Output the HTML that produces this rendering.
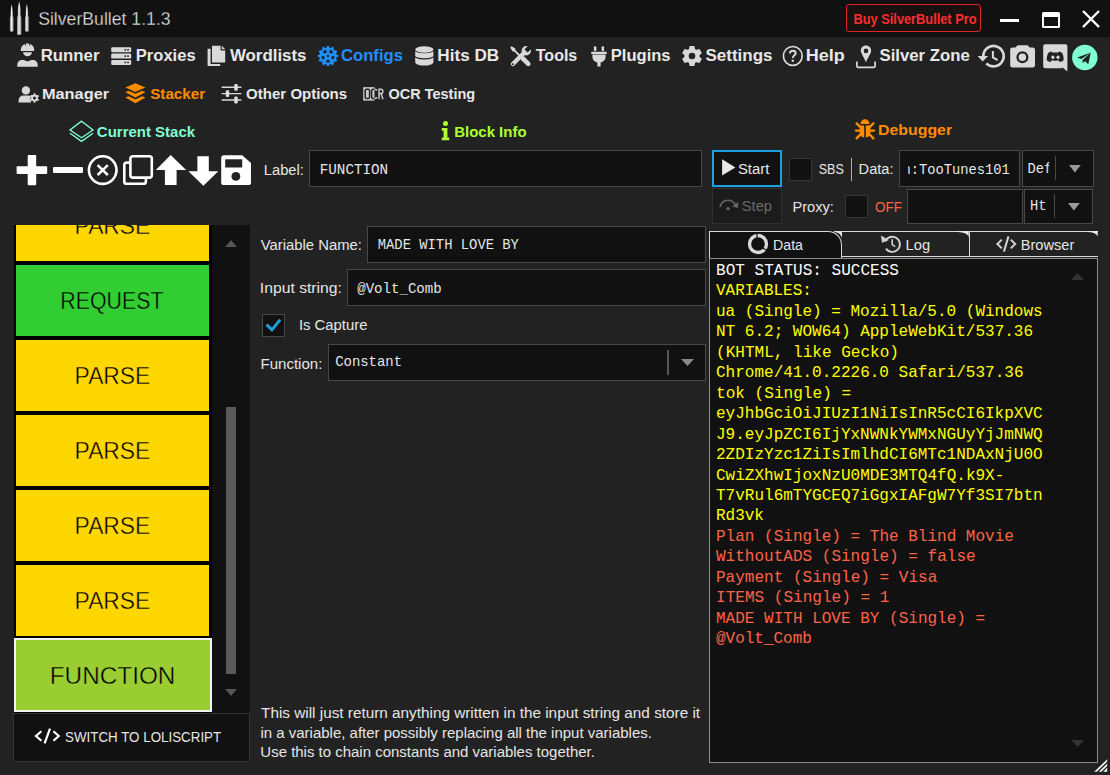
<!DOCTYPE html>
<html><head><meta charset="utf-8"><title>SilverBullet 1.1.3</title>
<style>
html,body{margin:0;padding:0;}
body{width:1110px;height:775px;overflow:hidden;background:#222222;position:relative;font-family:"Liberation Sans",sans-serif;}
.a{position:absolute;box-sizing:border-box;}
.t{position:absolute;white-space:pre;line-height:0;transform-origin:0 50%;display:block;z-index:5;}
.in{position:absolute;box-sizing:border-box;background:#111111;border:1px solid #484848;}
.blk{position:absolute;left:16.2px;width:192.6px;height:70.5px;}
svg{position:absolute;overflow:visible;}
</style></head><body>
<!-- title bar -->
<div class="a" style="left:0;top:0;width:1110px;height:37px;background:#111111"></div>
<div class="a" style="left:846px;top:4px;width:135px;height:28px;border:1.4px solid #dc2626;border-radius:3px;background:#1a1111"></div>
<!-- window buttons -->
<div class="a" style="left:1000px;top:19px;width:19px;height:2.5px;background:#fff"></div>
<div class="a" style="left:1042px;top:12px;width:18px;height:16px;border:2px solid #fff;border-top-width:5px;border-radius:1.5px"></div>
<svg style="left:1082px;top:10px" width="18" height="18" viewBox="0 0 18 18"><path d="M1 1L17 17M17 1L1 17" stroke="#fff" stroke-width="2.4" fill="none"/></svg>

<!-- stack list -->
<div class="a" style="left:14px;top:225px;width:197.5px;height:488px;background:#000"></div>
<div class="blk" style="top:190px;background:#ffd700"></div>
<div class="blk" style="top:265px;background:#32cd32"></div>
<div class="blk" style="top:340px;background:#ffd700"></div>
<div class="blk" style="top:415px;background:#ffd700"></div>
<div class="blk" style="top:490px;background:#ffd700"></div>
<div class="blk" style="top:565px;background:#ffd700"></div>
<div class="a" style="left:14px;top:638px;width:197.5px;height:74px;background:#9acd32;border:2px solid #f4f4f4"></div>
<!-- mask above list -->
<div class="a" style="left:10px;top:188px;width:240px;height:37px;background:#222222;z-index:8"></div>
<!-- list scrollbar -->
<div class="a" style="left:212px;top:225px;width:37.5px;height:488px;background:#111111"></div>
<div class="a" style="left:226px;top:407px;width:10px;height:267px;background:#595959"></div>
<svg style="left:225px;top:240px" width="12" height="7" viewBox="0 0 12 7"><path d="M0 7L6 0L12 7Z" fill="#555"/></svg>
<svg style="left:225px;top:689px" width="12" height="7" viewBox="0 0 12 7"><path d="M0 0L6 7L12 0Z" fill="#555"/></svg>
<!-- switch button -->
<div class="in" style="left:13px;top:713px;width:236.5px;height:49px;border-color:#333"></div>

<!-- inputs -->
<div class="in" style="left:309.2px;top:150.3px;width:392.6px;height:37.1px"></div>
<div class="in" style="left:367px;top:225.5px;width:338.5px;height:37px"></div>
<div class="in" style="left:347px;top:269px;width:358.5px;height:37px"></div>
<div class="in" style="left:261.5px;top:313.5px;width:23.5px;height:23px"></div>
<div class="in" style="left:328px;top:344px;width:377.5px;height:37px"></div>
<div class="a" style="left:667px;top:350px;width:1.5px;height:25px;background:#555"></div>
<svg style="left:681px;top:359px" width="13" height="7" viewBox="0 0 13 7"><path d="M0 0L6.5 7L13 0Z" fill="#8a8a8a"/></svg>

<!-- debugger controls -->
<div class="in" style="left:712.3px;top:150.2px;width:69.6px;height:36.9px;border:2.5px solid #1ba1e2"></div>
<div class="in" style="left:712.3px;top:188.3px;width:69.6px;height:36px;border-color:#303030;background:#1b1b1b"></div>
<div class="in" style="left:789px;top:157.5px;width:23px;height:23px;border-color:#353535"></div>
<div class="a" style="left:850.5px;top:157.5px;width:1.5px;height:23px;background:#b0b0b0"></div>
<div class="in" style="left:899.2px;top:150.3px;width:121px;height:37.1px"></div>
<div class="in" style="left:1021.6px;top:150.3px;width:72.2px;height:37.1px"></div>
<div class="a" style="left:1054.8px;top:156.4px;width:1.3px;height:24px;background:#484848"></div>
<svg style="left:1069px;top:164.9px" width="12" height="8" viewBox="0 0 12 8"><path d="M0 0L5.9 7.6L11.8 0Z" fill="#999"/></svg>
<div class="in" style="left:845px;top:195px;width:23px;height:23px;border-color:#353535"></div>
<div class="in" style="left:907.3px;top:188.6px;width:115.4px;height:35.6px"></div>
<div class="in" style="left:1023.5px;top:188.6px;width:69.3px;height:35.6px"></div>
<div class="a" style="left:1053.9px;top:194.2px;width:1.3px;height:24px;background:#484848"></div>
<svg style="left:1068.1px;top:203.1px" width="12" height="8" viewBox="0 0 12 8"><path d="M0 0L5.9 7.4L11.8 0Z" fill="#999"/></svg>

<!-- tabs -->
<div class="a" style="left:709px;top:230.5px;width:133px;height:28px;background:#111111;border:1px solid #d8d8d8;border-bottom:none;border-radius:0 14px 0 0"></div>
<div class="a" style="left:841px;top:230.5px;width:128.5px;height:26.5px;border:1px solid #d8d8d8;border-left:none;"></div>
<div class="a" style="left:968.5px;top:230.5px;width:129.5px;height:26.5px;border:1px solid #d8d8d8;border-left:none;border-right:none"></div>
<!-- console -->
<div class="a" style="left:709px;top:258.3px;width:389px;height:504.7px;background:#111111;border:1.3px solid #8c8c8c"></div>
<svg style="left:1071px;top:273px" width="13" height="7" viewBox="0 0 13 7"><path d="M0 7L6.5 0L13 7Z" fill="#333"/></svg>
<svg style="left:1071px;top:739.5px" width="13" height="7" viewBox="0 0 13 7"><path d="M0 0L6.5 7L13 0Z" fill="#333"/></svg>
<svg style="left:1094px;top:759px" width="14" height="13" viewBox="0 0 14 13"><path d="M0.2 12.8 L13.2 0.2 L13.2 2.6 L2.8 12.8 Z M4.8 12.8 L13.2 4.6 L13.2 7.0 L7.4 12.8 Z M9.2 12.8 L13.2 8.8 L13.2 12.8 Z" fill="#f4f4f4"/></svg>

<!-- logo bullets -->
<svg style="left:0;top:0" width="40" height="37" viewBox="0 0 40 37">
<defs><linearGradient id="bg" x1="0" x2="1" y1="0" y2="0"><stop offset="0" stop-color="#7d7d7d"/><stop offset="0.45" stop-color="#f0f0f0"/><stop offset="1" stop-color="#8a8a8a"/></linearGradient></defs>
<path d="M11.7 4.3 C11.13 7.30 10.55 10.30 10.55 13.30 L10.55 15.72 L9.85 17.92 L9.85 31.5 L13.55 31.5 L13.55 17.92 L12.85 15.72 L12.85 13.30 C12.85 10.30 12.27 7.30 11.7 4.3 Z" fill="url(#bg)"/>
<path d="M19.2 1.2 C18.52 4.20 17.84 7.20 17.84 10.20 L17.84 15.27 L17.00 17.47 L17.00 34.7 L21.40 34.7 L21.40 17.47 L20.56 15.27 L20.56 10.20 C20.56 7.20 19.88 4.20 19.2 1.2 Z" fill="url(#bg)"/>
<path d="M26.9 3.8 C26.31 6.80 25.72 9.80 25.72 12.80 L25.72 15.43 L25.00 17.63 L25.00 31.5 L28.80 31.5 L28.80 17.63 L28.08 15.43 L28.08 12.80 C28.08 9.80 27.49 6.80 26.9 3.8 Z" fill="url(#bg)"/>
</svg>

<!-- Runner: user hard hat -->
<svg style="left:17px;top:43px" width="21" height="24" viewBox="0 0 21 24" fill="#d9d9d9">
<path d="M3.8 8.0 L17.2 8.0 L17.2 6.9 C17.2 4.2 15.6 2.0 13.2 1.1 L12.6 3.6 L12.0 0.4 L9.0 0.4 L8.4 3.6 L7.8 1.1 C5.4 2.0 3.8 4.2 3.8 6.9 Z"/>
<path d="M6.1 9.3 L14.9 9.3 C14.9 11.6 12.9 13.3 10.5 13.3 C8.1 13.3 6.1 11.6 6.1 9.3 Z"/>
<path d="M0.3 23.8 L0.3 21.5 C0.3 18.8 2.6 16.9 5.3 16.9 L6.6 16.9 L10.5 18.6 L14.4 16.9 L15.7 16.9 C18.4 16.9 20.7 18.8 20.7 21.5 L20.7 23.8 Z"/>
</svg>

<!-- Proxies: server -->
<svg style="left:111px;top:47px" width="21" height="18" viewBox="0 0 21 18">
<g fill="#d9d9d9"><rect x="0.2" y="0.3" width="20" height="5" rx="1.2"/><rect x="0.2" y="6.6" width="20" height="5" rx="1.2"/><rect x="0.2" y="12.9" width="20" height="5" rx="1.2"/></g>
<g fill="#222"><rect x="13.4" y="2.1" width="1.7" height="1.5"/><rect x="16.2" y="2.1" width="1.7" height="1.5"/><rect x="13.4" y="8.4" width="1.7" height="1.5"/><rect x="16.2" y="8.4" width="1.7" height="1.5"/><rect x="13.4" y="14.7" width="1.7" height="1.5"/><rect x="16.2" y="14.7" width="1.7" height="1.5"/></g>
</svg>

<!-- Wordlists: copy -->
<svg style="left:207px;top:45px" width="19" height="22" viewBox="0 0 19 22" fill="#d9d9d9">
<path d="M0.6 3.7 L3.6 3.7 L3.6 19 L13.2 19 L13.2 21 L0.6 21 Z"/>
<path d="M5.0 0.8 L13.6 0.8 L13.6 5.4 L18.2 5.4 L18.2 17.6 L5.0 17.6 Z"/>
<path d="M14.8 0.8 L18.2 4.2 L14.8 4.2 Z"/>
</svg>

<!-- Configs: wheel -->
<svg style="left:317.7px;top:45.9px" width="20" height="20" viewBox="-10 -10 20 20">
<g fill="#1e90ff"><circle r="8.6"/>
<g id="tt"><rect x="-1.35" y="-10.1" width="2.7" height="3" rx="0.7"/></g><use href="#tt" transform="rotate(30)"/><use href="#tt" transform="rotate(60)"/><use href="#tt" transform="rotate(90)"/><use href="#tt" transform="rotate(120)"/><use href="#tt" transform="rotate(150)"/><use href="#tt" transform="rotate(180)"/><use href="#tt" transform="rotate(210)"/><use href="#tt" transform="rotate(240)"/><use href="#tt" transform="rotate(270)"/><use href="#tt" transform="rotate(300)"/><use href="#tt" transform="rotate(330)"/></g>
<g fill="#222"><circle r="1.15"/><path transform="rotate(0)" d="M-2.2 6.0 Q0 7.1 2.2 6.0 L1.0 3.7 Q0 3.3 -1.0 3.7 Z"/><path transform="rotate(72)" d="M-2.2 6.0 Q0 7.1 2.2 6.0 L1.0 3.7 Q0 3.3 -1.0 3.7 Z"/><path transform="rotate(144)" d="M-2.2 6.0 Q0 7.1 2.2 6.0 L1.0 3.7 Q0 3.3 -1.0 3.7 Z"/><path transform="rotate(216)" d="M-2.2 6.0 Q0 7.1 2.2 6.0 L1.0 3.7 Q0 3.3 -1.0 3.7 Z"/><path transform="rotate(288)" d="M-2.2 6.0 Q0 7.1 2.2 6.0 L1.0 3.7 Q0 3.3 -1.0 3.7 Z"/></g>
</svg>

<!-- Hits DB: database -->
<svg style="left:415px;top:46px" width="19" height="20" viewBox="0 0 19 20" fill="#d9d9d9">
<ellipse cx="9.3" cy="3.5" rx="9.1" ry="3.3"/>
<path d="M0.2 5.0 C2 8.0 16.6 8.0 18.4 5.0 L18.4 9.9 C16.6 12.9 2 12.9 0.2 9.9 Z"/>
<path d="M0.2 11.3 C2 14.3 16.6 14.3 18.4 11.3 L18.4 16.4 C16.6 20.6 2 20.6 0.2 16.4 Z"/>
</svg>

<!-- Tools -->
<svg style="left:509.7px;top:45.8px" width="21" height="21" viewBox="0 0 21 21">
<g fill="#d9d9d9" stroke="none">
<path d="M0.2 1.6 L1.6 0.2 L5.2 2.4 L5.6 4.4 L4.4 5.6 L2.4 5.2 Z"/>
<circle cx="16.3" cy="4.7" r="4.7"/>
</g>
<g stroke="#d9d9d9" fill="none">
<path d="M4.6 4.6 L10.4 10.4" stroke-width="1.9"/>
<path d="M13.0 12.6 L18.3 17.9" stroke-width="4.6" stroke-linecap="round"/>
<path d="M12.6 12.2 L13.6 13.2" stroke-width="4.6"/>
<path d="M2.9 18.1 L14.2 6.8" stroke-width="4.3" stroke-linecap="round"/>
</g>
<path d="M16.0 5.0 L14.4 3.4 L18.6 -0.8 L21.8 2.4 L17.6 6.6 Z" fill="#222"/>
<circle cx="2.8" cy="18.2" r="0.95" fill="#222"/>
</svg>

<!-- Plugins: plug -->
<svg style="left:590.5px;top:45.8px" width="16" height="21" viewBox="0 0 16 21" fill="#d9d9d9">
<rect x="2.9" y="0.2" width="2.5" height="5" rx="1.1"/><rect x="10.6" y="0.2" width="2.5" height="5" rx="1.1"/>
<rect x="0.2" y="5.7" width="15.6" height="2.3" rx="0.6"/>
<path d="M1.4 8.6 L14.6 8.6 L14.6 10.4 C14.6 13.6 12.6 15.8 9.6 16.4 L9.6 20.4 L6.4 20.4 L6.4 16.4 C3.4 15.8 1.4 13.6 1.4 10.4 Z"/>
</svg>

<!-- Settings: cog -->
<svg style="left:681.7px;top:45.9px" width="20" height="20" viewBox="-10 -10 20 20">
<g fill="#d9d9d9"><circle r="7.4"/>
<g id="ct"><path d="M-3.3 -6.2 L-2.3 -10 L2.3 -10 L3.3 -6.2 Z"/></g>
<use href="#ct" transform="rotate(60)"/><use href="#ct" transform="rotate(120)"/><use href="#ct" transform="rotate(180)"/><use href="#ct" transform="rotate(240)"/><use href="#ct" transform="rotate(300)"/></g>
<circle r="3.3" fill="#222"/>
</svg>

<!-- Help -->
<svg style="left:783px;top:46px" width="20" height="20" viewBox="0 0 20 20">
<circle cx="9.8" cy="9.9" r="9.4" fill="none" stroke="#d9d9d9" stroke-width="1.7"/>
<path d="M6.9 7.6 C6.9 5.6 8.2 4.7 9.8 4.7 C11.5 4.7 12.7 5.7 12.7 7.2 C12.7 9.2 9.8 9.4 9.8 12.0" fill="none" stroke="#d9d9d9" stroke-width="1.9"/>
<circle cx="9.8" cy="14.7" r="1.2" fill="#d9d9d9"/>
</svg>

<!-- Silver Zone: map pin on tray -->
<svg style="left:856px;top:44.5px" width="20" height="24" viewBox="0 0 20 24">
<path d="M10 0.4 C6.9 0.4 4.8 2.7 4.8 5.6 C4.8 8.8 8.2 12.6 10 17.4 C11.8 12.6 15.2 8.8 15.2 5.6 C15.2 2.7 13.1 0.4 10 0.4 Z" fill="#d9d9d9"/>
<circle cx="10" cy="5.9" r="2.3" fill="#222"/>
<path d="M0.9 17.2 L0.9 21.2 C0.9 22 1.4 22.4 2.2 22.4 L17.8 22.4 C18.6 22.4 19.1 22 19.1 21.2 L19.1 17.2" fill="none" stroke="#d9d9d9" stroke-width="1.7" stroke-linecap="round"/>
</svg>

<!-- history -->
<svg style="left:977px;top:44px" width="29" height="25" viewBox="0 0 29 25">
<path d="M6.3 12.6 A10.2 10.2 0 1 1 9.3 19.4" fill="none" stroke="#d9d9d9" stroke-width="2.7"/>
<path d="M0.6 11.9 L11.1 11.9 L5.6 17.6 Z" fill="#d9d9d9"/>
<path d="M15.9 7.0 L15.9 13.4 L20.6 16.2" fill="none" stroke="#d9d9d9" stroke-width="2"/>
</svg>

<!-- camera -->
<svg style="left:1010px;top:45px" width="26" height="23" viewBox="0 0 26 23">
<path d="M2.6 2.4 L5.6 2.4 L7.2 0.6 Q7.6 0.2 8.2 0.2 L17.0 0.2 Q17.6 0.2 18.0 0.6 L19.6 2.4 L22.6 2.4 Q25.0 2.4 25.0 4.8 L25.0 20.2 Q25.0 22.6 22.6 22.6 L2.6 22.6 Q0.2 22.6 0.2 20.2 L0.2 4.8 Q0.2 2.4 2.6 2.4 Z" fill="#d9d9d9"/>
<circle cx="12.4" cy="12.3" r="4.9" fill="none" stroke="#222" stroke-width="2.3"/>
</svg>

<!-- discord -->
<svg style="left:1042.5px;top:43.5px" width="25" height="28" viewBox="0 0 25 28">
<path d="M2.2 0.3 L22.4 0.3 C23.6 0.3 24.4 1.1 24.4 2.3 L24.4 27.6 L18.6 22.8 L19.4 24.2 L2.2 24.2 C1.0 24.2 0.2 23.4 0.2 22.2 L0.2 2.3 C0.2 1.1 1.0 0.3 2.2 0.3 Z" fill="#d9d9d9"/>
<path d="M8.6 7.6 C7.2 7.8 6.0 8.3 5.2 8.9 C4.0 11.2 3.6 13.8 3.8 16.2 C5.0 17.2 6.4 17.8 7.8 17.9 L8.8 16.5 C7.6 16.1 7.0 15.6 7.0 15.6 C10.4 17.2 14.0 17.2 17.4 15.6 C17.4 15.6 16.8 16.1 15.6 16.5 L16.6 17.9 C18.0 17.8 19.4 17.2 20.6 16.2 C20.8 13.8 20.4 11.2 19.2 8.9 C18.4 8.3 17.2 7.8 15.8 7.6 L15.3 8.6 C13.3 8.3 11.1 8.3 9.1 8.6 Z" fill="#222"/>
<ellipse cx="9.9" cy="13.2" rx="1.55" ry="1.7" fill="#d9d9d9"/><ellipse cx="15.0" cy="13.2" rx="1.55" ry="1.7" fill="#d9d9d9"/>
</svg>

<!-- telegram -->
<svg style="left:1072.4px;top:44.9px" width="26" height="26" viewBox="0 0 26 26">
<circle cx="12.8" cy="12.5" r="12.7" fill="#7fffd4"/>
<path d="M5.3 12.5 L18.8 7.6 L9.4 13.9 Z" fill="#222"/>
<path d="M18.8 7.6 L16.3 19.2 L13.1 16.2 L10.7 18.1 L10.6 15.0 Z" fill="#222"/>
</svg>

<!-- Manager: user cog -->
<svg style="left:18px;top:85.5px" width="22" height="17" viewBox="0 0 22 17">
<circle cx="7.9" cy="4.4" r="4.2" fill="#d9d9d9"/>
<path d="M0.6 16.6 L0.6 14.6 C0.6 11.6 2.8 9.6 5.6 9.6 L10.2 9.6 C11.4 9.6 12.3 9.9 13.0 10.5 L12.2 13.2 L13.2 16.6 Z" fill="#d9d9d9"/>
<g transform="translate(16.5 12)" fill="#d9d9d9"><circle r="3.4"/>
<g id="mt"><rect x="-0.9" y="-4.7" width="1.8" height="2"/></g><use href="#mt" transform="rotate(60)"/><use href="#mt" transform="rotate(120)"/><use href="#mt" transform="rotate(180)"/><use href="#mt" transform="rotate(240)"/><use href="#mt" transform="rotate(300)"/>
<circle r="1.5" fill="#222"/></g>
</svg>

<!-- Stacker: layer group -->
<svg style="left:125px;top:83.4px" width="21" height="21" viewBox="0 0 21 21" fill="#ff8c00">
<path d="M10.4 0.2 L20.4 4.6 L10.4 9.0 L0.4 4.6 Z"/>
<path d="M0.4 9.2 L3.6 7.8 L10.4 10.8 L17.2 7.8 L20.4 9.2 L10.4 14.4 Z"/>
<path d="M0.4 14.6 L3.6 13.2 L10.4 16.4 L17.2 13.2 L20.4 14.6 L10.4 20.2 Z"/>
</svg>

<!-- Other options: sliders -->
<svg style="left:221px;top:83px" width="21" height="21" viewBox="0 0 21 21">
<g stroke="#d9d9d9" stroke-width="1.4"><path d="M0.6 4.3H20.4M0.6 10.6H20.4M0.6 17H20.4"/></g>
<g fill="#e0e0e0"><rect x="13.3" y="0.9" width="3.4" height="6.8" rx="1.2"/><rect x="4.8" y="7.2" width="3.4" height="6.8" rx="1.2"/><rect x="13.3" y="13.6" width="3.4" height="6.8" rx="1.2"/></g>
</svg>

<!-- Current stack icon -->
<svg style="left:69px;top:120px" width="26" height="23" viewBox="0 0 26 23">
<path d="M12.5 1.2 L24.0 10.0 L12.5 17.8 L1.0 10.0 Z M1.0 13.3 L12.5 21.4 L24.0 13.3" fill="none" stroke="#7fffd4" stroke-width="1.35" stroke-linejoin="miter"/>
</svg>

<!-- Block info i -->
<svg style="left:440.5px;top:120.8px" width="9" height="20" viewBox="0 0 9 20" fill="#adff2f">
<circle cx="4.5" cy="2.6" r="2.5"/>
<path d="M0.8 7.0 L6.4 7.0 L6.4 16.4 L8.2 16.4 L8.2 19.2 L0.8 19.2 L0.8 16.4 L2.6 16.4 L2.6 9.8 L0.8 9.8 Z"/>
</svg>

<!-- Debugger bug -->
<svg style="left:854.6px;top:118.8px" width="20" height="21" viewBox="0 0 20 21">
<g fill="#ff8c00">
<path d="M5.6 5.0 C5.6 2.4 7.4 0.3 10 0.3 C12.6 0.3 14.4 2.4 14.4 5.0 Z"/>
<path d="M4.6 6.4 L9.2 6.4 L9.2 18.6 C6.4 18.4 4.6 16.2 4.6 13.6 Z"/>
<path d="M15.4 6.4 L10.8 6.4 L10.8 18.6 C13.6 18.4 15.4 16.2 15.4 13.6 Z"/>
</g>
<g stroke="#ff8c00" stroke-width="2.3" stroke-linecap="round" fill="none">
<path d="M4.8 7.6 L1.6 4.4 M15.2 7.6 L18.4 4.4 M4.6 11.6 L0.9 11.6 M15.4 11.6 L19.1 11.6 M5.2 15.6 L1.6 19.4 M14.8 15.6 L18.4 19.4"/>
</g>
</svg>

<!-- toolbar: plus -->
<svg style="left:16px;top:154px" width="32" height="32" viewBox="0 0 32 32" fill="#ffffff">
<rect x="0.6" y="12.3" width="30.6" height="7.6" rx="1"/><rect x="11.7" y="0.9" width="8.5" height="30.3" rx="1"/>
</svg>
<!-- minus -->
<div class="a" style="left:52.9px;top:166.9px;width:30.2px;height:6.4px;background:#fff;border-radius:1px"></div>
<!-- circle x -->
<svg style="left:87px;top:154px" width="32" height="32" viewBox="0 0 32 32">
<circle cx="15.7" cy="16.1" r="13.8" fill="none" stroke="#fff" stroke-width="2.6"/>
<path d="M10.6 11.2 L20.8 21 M20.8 11.2 L10.6 21" stroke="#fff" stroke-width="2.5" fill="none"/>
</svg>
<!-- copy -->
<svg style="left:122px;top:154px" width="32" height="32" viewBox="0 0 32 32" fill="none" stroke="#fff" stroke-width="2.6">
<path d="M7.2 8.6 L4.6 8.6 Q2.3 8.6 2.3 10.9 L2.3 27.4 Q2.3 29.7 4.6 29.7 L21.6 29.7 Q23.9 29.7 23.9 27.4 L23.9 25"/>
<rect x="8.4" y="2.2" width="21.4" height="21.4" rx="2.4"/>
</svg>
<!-- up arrow -->
<svg style="left:155px;top:154px" width="32" height="32" viewBox="0 0 32 32" fill="#fff">
<path d="M15.7 0.9 L31.1 16.1 L21.6 16.1 L21.6 31 L9.9 31 L9.9 16.1 L0.8 16.1 Z"/>
</svg>
<!-- down arrow -->
<svg style="left:188px;top:154px" width="32" height="32" viewBox="0 0 32 32" fill="#fff">
<path d="M9.4 2.2 L20.8 2.2 L20.8 17.3 L30.3 17.3 L15.4 31.8 L0.4 17.3 L9.4 17.3 Z"/>
</svg>
<!-- save -->
<svg style="left:221px;top:155px" width="31" height="31" viewBox="0 0 31 31">
<path d="M2.8 0.3 L21.2 0.3 L30 8.1 L30 27.4 Q30 30 27.4 30 L2.8 30 Q0.2 30 0.2 27.4 L0.2 2.9 Q0.2 0.3 2.8 0.3 Z" fill="#fff"/>
<rect x="4.2" y="4.3" width="17" height="8.2" fill="#222"/>
<circle cx="14.9" cy="21.4" r="4.4" fill="#222"/>
</svg>

<!-- checkbox tick -->
<svg style="left:262px;top:314px" width="23" height="22" viewBox="0 0 23 22">
<path d="M4.6 10.6 L9.9 15.9 L18.2 5.6" fill="none" stroke="#1ba1e2" stroke-width="2.9"/>
</svg>

<!-- play -->
<svg style="left:722px;top:159.4px" width="14" height="17" viewBox="0 0 14 17"><path d="M0.1 0.2 L13.4 8.4 L0.1 16.6 Z" fill="#e8e8e8"/></svg>
<!-- step -->
<svg style="left:719px;top:199px" width="20" height="12" viewBox="0 0 20 12">
<path d="M0.9 8.0 C2.2 3.4 5.4 1.2 9.0 1.2 C12.4 1.2 15.2 3.0 17.0 6.6" fill="none" stroke="#666" stroke-width="1.6"/>
<path d="M19.4 3.0 L18.9 8.9 L13.2 7.6 Z" fill="#666"/>
<circle cx="9.1" cy="9.7" r="1.7" fill="#666"/>
</svg>

<!-- tab icon: data circle-notch -->
<svg style="left:747px;top:233.2px" width="22" height="22" viewBox="-11 -11 22 22">
<circle r="8.5" fill="none" stroke="#dadada" stroke-width="3.3"/>
<path d="M-1.4 -11 L-0.2 -11 L-0.6 -5 L-1.8 -5 Z" fill="#111"/>
<path d="M5.0 3.4 L10.4 6.4 L9.6 7.6 L4.4 4.4 Z" fill="#111"/>
</svg>
<!-- tab icon: history -->
<svg style="left:880px;top:233.5px" width="22" height="21" viewBox="0 0 22 21">
<path d="M5.3 7.3 A7.6 7.6 0 1 1 6.0 14.6" fill="none" stroke="#d2d2d2" stroke-width="1.9"/>
<path d="M0.9 1.6 L2.0 8.8 L8.8 6.0 Z" fill="#d2d2d2"/>
<path d="M12.2 5.2 L12.2 10.6 L15.2 12.6" fill="none" stroke="#d2d2d2" stroke-width="1.6"/>
</svg>
<!-- tab icon: code -->
<svg style="left:996px;top:235.5px" width="21" height="16" viewBox="0 0 21 16" fill="none" stroke="#d2d2d2" stroke-width="2">
<path d="M5.8 3.6 L1.4 8.0 L5.8 12.4 M14.8 3.6 L19.2 8.0 L14.8 12.4 M12.5 0.4 L7.9 15.6"/>
</svg>
<!-- tab corner wedges -->
<svg style="left:958.3px;top:230.5px" width="11" height="7" viewBox="0 0 11 7"><path d="M0 0 L10.7 0 L10.7 6.2 Q9.6 1.2 0 1 Z" fill="#ececec"/></svg>
<svg style="left:1087px;top:230.5px" width="11" height="7" viewBox="0 0 11 7"><path d="M0 0 L10.7 0 L10.7 5.6 Q9.6 1.2 0 1 Z" fill="#ececec"/></svg>
<svg style="left:832px;top:230.5px" width="10" height="7" viewBox="0 0 10 7"><path d="M2 0 L10 0 L10 7 Q8 0.8 2 1 Z" fill="#e4e4e4"/></svg>

<!-- switch code icon -->
<svg style="left:34px;top:728px" width="27" height="16" viewBox="0 0 27 16" fill="none" stroke="#fff" stroke-width="2.2">
<path d="M7.4 3.2 L2.0 8.0 L7.4 12.8 M19.4 3.2 L24.8 8.0 L19.4 12.8 M16.0 0.6 L10.6 15.4"/>
</svg>

<!-- OCR icon -->
<svg style="left:363px;top:87px" width="21" height="14" viewBox="0 0 21 14">
<rect x="0.2" y="0.1" width="11.3" height="13.5" fill="#c9c9c9"/>
<rect x="2.2" y="2.2" width="4.4" height="9.4" rx="1.6" fill="none" stroke="#222" stroke-width="1.5"/>
<path d="M11.5 2.2 L10.4 2.2 Q8.6 2.2 8.6 4.0 L8.6 9.8 Q8.6 11.6 10.4 11.6 L11.5 11.6" fill="none" stroke="#222" stroke-width="1.5"/>
<path d="M11.5 2.2 L12.0 2.2 Q13.6 2.2 13.6 3.8 M11.5 11.6 L12.0 11.6 Q13.6 11.6 13.6 10.0" fill="none" stroke="#c9c9c9" stroke-width="1.5"/>
<path d="M16.0 12.2 L16.0 2.2 L18.0 2.2 Q19.8 2.2 19.8 4.4 Q19.8 6.6 18.0 6.6 L16.0 6.6 M18.0 6.6 L20.0 12.2" fill="none" stroke="#c9c9c9" stroke-width="1.5"/>
</svg>

<span id="t0" class="t" style="left:38px;top:18.59px;font:normal 18.5px/0 'Liberation Sans', sans-serif;color:#e4e4e4;transform:translateX(0.15px) scaleX(0.9543);-webkit-text-stroke:0.3px #111111;">SilverBullet 1.1.3</span>
<span id="t1" class="t" style="left:853px;top:19.45px;font:bold 14px/0 'Liberation Sans', sans-serif;color:#ff2d2d;transform:translateX(0.52px) scaleX(0.9138);">Buy SilverBullet Pro</span>
<span id="t2" class="t" style="left:40px;top:56.18px;font:bold 16.8px/0 'Liberation Sans', sans-serif;color:#e8e8e8;transform:translateX(0.69px) scaleX(0.9998);">Runner</span>
<span id="t3" class="t" style="left:135px;top:56.18px;font:bold 16.8px/0 'Liberation Sans', sans-serif;color:#e8e8e8;transform:translateX(0.79px) scaleX(0.9871);">Proxies</span>
<span id="t4" class="t" style="left:229px;top:56.18px;font:bold 16.8px/0 'Liberation Sans', sans-serif;color:#e8e8e8;transform:translateX(0.91px) scaleX(1.0060);">Wordlists</span>
<span id="t5" class="t" style="left:341px;top:56.18px;font:bold 16.8px/0 'Liberation Sans', sans-serif;color:#1e90ff;transform:translateX(0.07px) scaleX(0.9903);">Configs</span>
<span id="t6" class="t" style="left:437px;top:56.18px;font:bold 16.8px/0 'Liberation Sans', sans-serif;color:#e8e8e8;transform:translateX(0.33px) scaleX(1.0200);">Hits DB</span>
<span id="t7" class="t" style="left:535px;top:56.18px;font:bold 16.8px/0 'Liberation Sans', sans-serif;color:#e8e8e8;transform:translateX(0.77px) scaleX(0.9540);">Tools</span>
<span id="t8" class="t" style="left:610px;top:56.18px;font:bold 16.8px/0 'Liberation Sans', sans-serif;color:#e8e8e8;transform:translateX(0.77px) scaleX(0.9866);">Plugins</span>
<span id="t9" class="t" style="left:705px;top:56.18px;font:bold 16.8px/0 'Liberation Sans', sans-serif;color:#e8e8e8;transform:translateX(0.45px) scaleX(1.0123);">Settings</span>
<span id="t10" class="t" style="left:805px;top:56.18px;font:bold 16.8px/0 'Liberation Sans', sans-serif;color:#e8e8e8;transform:translateX(0.63px) scaleX(1.0761);">Help</span>
<span id="t11" class="t" style="left:879px;top:56.18px;font:bold 16.8px/0 'Liberation Sans', sans-serif;color:#e8e8e8;transform:translateX(0.47px) scaleX(0.9982);">Silver Zone</span>
<span id="t12" class="t" style="left:41px;top:93.73px;font:bold 15.2px/0 'Liberation Sans', sans-serif;color:#e8e8e8;transform:translateX(0.88px) scaleX(1.0775);">Manager</span>
<span id="t13" class="t" style="left:150px;top:93.73px;font:bold 15.2px/0 'Liberation Sans', sans-serif;color:#ff8c00;transform:translateX(0.17px) scaleX(1.0016);">Stacker</span>
<span id="t14" class="t" style="left:246px;top:93.73px;font:bold 15.2px/0 'Liberation Sans', sans-serif;color:#e8e8e8;transform:translateX(0.12px) scaleX(0.9897);">Other Options</span>
<span id="t15" class="t" style="left:388px;top:93.73px;font:bold 15.2px/0 'Liberation Sans', sans-serif;color:#e8e8e8;transform:translateX(0.41px) scaleX(0.9547);">OCR Testing</span>
<span id="t16" class="t" style="left:96px;top:131.73px;font:bold 15.2px/0 'Liberation Sans', sans-serif;color:#7fffd4;transform:translateX(0.83px) scaleX(0.9867);">Current Stack</span>
<span id="t17" class="t" style="left:454px;top:131.73px;font:bold 15.2px/0 'Liberation Sans', sans-serif;color:#adff2f;transform:translateX(0.18px) scaleX(0.9860);">Block Info</span>
<span id="t18" class="t" style="left:877px;top:129.73px;font:bold 15.2px/0 'Liberation Sans', sans-serif;color:#ff8c00;transform:translateX(0.92px) scaleX(1.0468);">Debugger</span>
<span id="t19" class="t" style="left:263px;top:169.63px;font:normal 15.5px/0 'Liberation Sans', sans-serif;color:#e6e6e6;transform:translateX(0.84px) scaleX(0.9469);">Label:</span>
<span id="t20" class="t" style="left:260px;top:244.63px;font:normal 15.5px/0 'Liberation Sans', sans-serif;color:#e6e6e6;transform:translateX(0.77px) scaleX(0.9569);">Variable Name:</span>
<span id="t21" class="t" style="left:259px;top:287.93px;font:normal 15.5px/0 'Liberation Sans', sans-serif;color:#e6e6e6;transform:translateX(0.80px) scaleX(1.0144);">Input string:</span>
<span id="t22" class="t" style="left:298px;top:324.63px;font:normal 15.5px/0 'Liberation Sans', sans-serif;color:#e6e6e6;transform:translateX(0.90px) scaleX(0.9582);">Is Capture</span>
<span id="t23" class="t" style="left:260px;top:363.63px;font:normal 15.5px/0 'Liberation Sans', sans-serif;color:#e6e6e6;transform:translateX(0.53px) scaleX(0.9697);">Function:</span>
<span id="t24" class="t" style="left:737px;top:169.33px;font:normal 15.5px/0 'Liberation Sans', sans-serif;color:#e6e6e6;transform:translateX(0.93px) scaleX(0.9615);">Start</span>
<span id="t25" class="t" style="left:741px;top:205.63px;font:normal 15.5px/0 'Liberation Sans', sans-serif;color:#6a6a6a;transform:translateX(0.74px) scaleX(0.9506);">Step</span>
<span id="t26" class="t" style="left:818px;top:169.43px;font:normal 15.5px/0 'Liberation Sans', sans-serif;color:#e6e6e6;transform:translateX(0.69px) scaleX(0.8105);">SBS</span>
<span id="t27" class="t" style="left:858px;top:169.03px;font:normal 15.5px/0 'Liberation Sans', sans-serif;color:#e6e6e6;transform:translateX(0.58px) scaleX(0.9439);">Data:</span>
<span id="t28" class="t" style="left:792px;top:207.33px;font:normal 15.5px/0 'Liberation Sans', sans-serif;color:#e6e6e6;transform:translateX(0.41px) scaleX(0.9437);">Proxy:</span>
<span id="t29" class="t" style="left:875px;top:207.33px;font:normal 15.5px/0 'Liberation Sans', sans-serif;color:#ff6347;transform:translateX(0.06px) scaleX(0.8718);">OFF</span>
<span id="t30" class="t" style="left:773px;top:244.73px;font:normal 15.5px/0 'Liberation Sans', sans-serif;color:#e6e6e6;transform:translateX(0.06px) scaleX(0.9143);">Data</span>
<span id="t31" class="t" style="left:905px;top:245.43px;font:normal 15.5px/0 'Liberation Sans', sans-serif;color:#e6e6e6;transform:translateX(0.61px) scaleX(0.9492);">Log</span>
<span id="t32" class="t" style="left:1020px;top:245.43px;font:normal 15.5px/0 'Liberation Sans', sans-serif;color:#e6e6e6;transform:translateX(0.69px) scaleX(0.9421);">Browser</span>
<span id="t33" class="t" style="left:65px;top:736.63px;font:normal 15.5px/0 'Liberation Sans', sans-serif;color:#e6e6e6;transform:translateX(0.06px) scaleX(0.8617);">SWITCH TO LOLISCRIPT</span>
<span id="t34" class="t" style="left:261px;top:712.70px;font:normal 15.3px/0 'Liberation Sans', sans-serif;color:#e6e6e6;transform:translateX(0.05px) scaleX(1.0007);">This will just return anything written in the input string and store it</span>
<span id="t35" class="t" style="left:260px;top:733.20px;font:normal 15.3px/0 'Liberation Sans', sans-serif;color:#e6e6e6;transform:translateX(0.43px) scaleX(0.9795);">in a variable, after possibly replacing all the input variables.</span>
<span id="t36" class="t" style="left:260px;top:751.70px;font:normal 15.3px/0 'Liberation Sans', sans-serif;color:#e6e6e6;transform:translateX(0.36px) scaleX(0.9785);">Use this to chain constants and variables together.</span>
<span id="t37" class="t" style="left:319px;top:171.00px;font:normal 15px/0 'Liberation Mono', monospace;color:#e6e6e6;transform:translateX(0.81px) scaleX(0.9475);">FUNCTION</span>
<span id="t38" class="t" style="left:377px;top:246.30px;font:normal 15px/0 'Liberation Mono', monospace;color:#e6e6e6;transform:translateX(0.71px) scaleX(0.9227);">MADE WITH LOVE BY</span>
<span id="t39" class="t" style="left:357px;top:290.00px;font:normal 15px/0 'Liberation Mono', monospace;color:#e6e6e6;transform:translateX(0.17px) scaleX(0.9396);">@Volt_Comb</span>
<span id="t40" class="t" style="left:335px;top:363.00px;font:normal 15px/0 'Liberation Mono', monospace;color:#e6e6e6;transform:translateX(0.14px) scaleX(0.9299);">Constant</span>
<span id="t41" class="t" style="left:902px;top:171.00px;font:normal 15px/0 'Liberation Mono', monospace;color:#e6e6e6;transform:translateX(0.50px) scaleX(0.9167);clip-path:inset(-20px -10.09px -20px 5.89px);">n:TooTunes101</span>
<span id="t42" class="t" style="left:1027px;top:169.60px;font:normal 15px/0 'Liberation Mono', monospace;color:#e6e6e6;transform:translateX(0.60px) scaleX(0.9167);clip-path:inset(-20px 39.44px -20px -6.11px);">Default</span>
<span id="t43" class="t" style="left:1030px;top:206.50px;font:normal 15px/0 'Liberation Mono', monospace;color:#e6e6e6;transform:translateX(0.00px) scaleX(0.9167);clip-path:inset(-20px 17.89px -20px -6.55px);">Http</span>
<span id="t44" class="t" style="left:60px;top:301.38px;font:normal 24.6px/0 'Liberation Sans', sans-serif;color:#000;transform:translateX(0.28px) scaleX(0.8683);-webkit-text-stroke:0.45px #32cd32;">REQUEST</span>
<span id="t45" class="t" style="left:74px;top:226.38px;font:normal 24.6px/0 'Liberation Sans', sans-serif;color:#000;transform:translateX(0.60px) scaleX(0.9285);-webkit-text-stroke:0.45px #ffd700;">PARSE</span>
<span id="t46" class="t" style="left:74px;top:376.38px;font:normal 24.6px/0 'Liberation Sans', sans-serif;color:#000;transform:translateX(0.60px) scaleX(0.9285);-webkit-text-stroke:0.45px #ffd700;">PARSE</span>
<span id="t47" class="t" style="left:74px;top:451.38px;font:normal 24.6px/0 'Liberation Sans', sans-serif;color:#000;transform:translateX(0.60px) scaleX(0.9285);-webkit-text-stroke:0.45px #ffd700;">PARSE</span>
<span id="t48" class="t" style="left:74px;top:526.38px;font:normal 24.6px/0 'Liberation Sans', sans-serif;color:#000;transform:translateX(0.60px) scaleX(0.9285);-webkit-text-stroke:0.45px #ffd700;">PARSE</span>
<span id="t49" class="t" style="left:74px;top:601.38px;font:normal 24.6px/0 'Liberation Sans', sans-serif;color:#000;transform:translateX(0.60px) scaleX(0.9285);-webkit-text-stroke:0.45px #ffd700;">PARSE</span>
<span id="t50" class="t" style="left:49px;top:676.18px;font:normal 24.6px/0 'Liberation Sans', sans-serif;color:#000;transform:translateX(0.71px) scaleX(0.9892);-webkit-text-stroke:0.45px #9acd32;">FUNCTION</span>
<span id="t51" class="t" style="left:716px;top:271.38px;font:normal 16.6px/0 'Liberation Mono', monospace;color:#fff;transform:translateX(0.00px) scaleX(0.9671);">BOT STATUS: SUCCESS</span>
<span id="t52" class="t" style="left:716px;top:290.85px;font:normal 16.6px/0 'Liberation Mono', monospace;color:#ff0;transform:translateX(0.00px) scaleX(0.9620);">VARIABLES:</span>
<span id="t53" class="t" style="left:716px;top:312.32px;font:normal 16.6px/0 'Liberation Mono', monospace;color:#ff0;transform:translateX(0.00px) scaleX(0.9648);">ua (Single) = Mozilla/5.0 (Windows</span>
<span id="t54" class="t" style="left:716px;top:331.79px;font:normal 16.6px/0 'Liberation Mono', monospace;color:#ff0;transform:translateX(0.00px) scaleX(0.9649);">NT 6.2; WOW64) AppleWebKit/537.36</span>
<span id="t55" class="t" style="left:716px;top:353.26px;font:normal 16.6px/0 'Liberation Mono', monospace;color:#ff0;transform:translateX(0.00px) scaleX(0.9671);">(KHTML, like Gecko)</span>
<span id="t56" class="t" style="left:716px;top:372.73px;font:normal 16.6px/0 'Liberation Mono', monospace;color:#ff0;transform:translateX(0.00px) scaleX(0.9650);">Chrome/41.0.2226.0 Safari/537.36</span>
<span id="t57" class="t" style="left:716px;top:394.20px;font:normal 16.6px/0 'Liberation Mono', monospace;color:#ff0;transform:translateX(0.00px) scaleX(0.9689);">tok (Single) =</span>
<span id="t58" class="t" style="left:716px;top:413.67px;font:normal 16.6px/0 'Liberation Mono', monospace;color:#ff0;transform:translateX(0.00px) scaleX(0.9648);">eyJhbGciOiJIUzI1NiIsInR5cCI6IkpXVC</span>
<span id="t59" class="t" style="left:716px;top:435.14px;font:normal 16.6px/0 'Liberation Mono', monospace;color:#ff0;transform:translateX(0.00px) scaleX(0.9648);">J9.eyJpZCI6IjYxNWNkYWMxNGUyYjJmNWQ</span>
<span id="t60" class="t" style="left:716px;top:454.61px;font:normal 16.6px/0 'Liberation Mono', monospace;color:#ff0;transform:translateX(0.00px) scaleX(0.9648);">2ZDIzYzc1ZiIsImlhdCI6MTc1NDAxNjU0O</span>
<span id="t61" class="t" style="left:716px;top:476.08px;font:normal 16.6px/0 'Liberation Mono', monospace;color:#ff0;transform:translateX(0.00px) scaleX(0.9652);">CwiZXhwIjoxNzU0MDE3MTQ4fQ.k9X-</span>
<span id="t62" class="t" style="left:716px;top:495.55px;font:normal 16.6px/0 'Liberation Mono', monospace;color:#ff0;transform:translateX(0.00px) scaleX(0.9648);">T7vRul6mTYGCEQ7iGgxIAFgW7Yf3SI7btn</span>
<span id="t63" class="t" style="left:716px;top:516.02px;font:normal 16.6px/0 'Liberation Mono', monospace;color:#ff0;transform:translateX(0.00px) scaleX(0.9620);">Rd3vk</span>
<span id="t64" class="t" style="left:716px;top:537.49px;font:normal 16.6px/0 'Liberation Mono', monospace;color:#ff6347;transform:translateX(0.00px) scaleX(0.9651);">Plan (Single) = The Blind Movie</span>
<span id="t65" class="t" style="left:716px;top:556.96px;font:normal 16.6px/0 'Liberation Mono', monospace;color:#ff6347;transform:translateX(0.00px) scaleX(0.9656);">WithoutADS (Single) = false</span>
<span id="t66" class="t" style="left:716px;top:578.43px;font:normal 16.6px/0 'Liberation Mono', monospace;color:#ff6347;transform:translateX(0.00px) scaleX(0.9662);">Payment (Single) = Visa</span>
<span id="t67" class="t" style="left:716px;top:597.90px;font:normal 16.6px/0 'Liberation Mono', monospace;color:#ff6347;transform:translateX(0.00px) scaleX(0.9674);">ITEMS (Single) = 1</span>
<span id="t68" class="t" style="left:716px;top:619.37px;font:normal 16.6px/0 'Liberation Mono', monospace;color:#ff6347;transform:translateX(0.00px) scaleX(0.9654);">MADE WITH LOVE BY (Single) =</span>
<span id="t69" class="t" style="left:716px;top:638.84px;font:normal 16.6px/0 'Liberation Mono', monospace;color:#ff6347;transform:translateX(0.00px) scaleX(0.9620);">@Volt_Comb</span>
</body></html>
